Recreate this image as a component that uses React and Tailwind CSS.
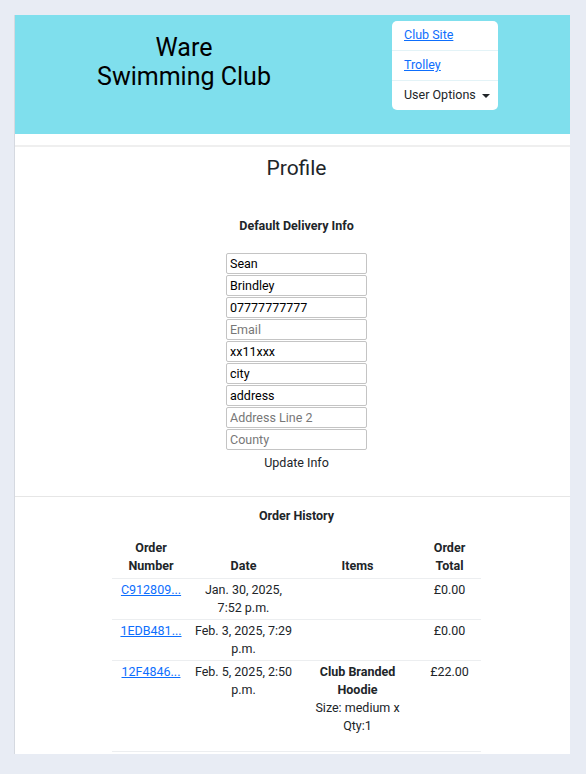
import React from "react";

const fields = [
  { value: "Sean", placeholder: "First Name" },
  { value: "Brindley", placeholder: "Last Name" },
  { value: "07777777777", placeholder: "Phone" },
  { value: "", placeholder: "Email" },
  { value: "xx11xxx", placeholder: "Postcode" },
  { value: "city", placeholder: "City" },
  { value: "address", placeholder: "Address Line 1" },
  { value: "", placeholder: "Address Line 2" },
  { value: "", placeholder: "County" },
];

const orders = [
  { id: "C912809...", date: "Jan. 30, 2025, 7:52 p.m.", items: null, total: "£0.00" },
  { id: "1EDB481...", date: "Feb. 3, 2025, 7:29 p.m.", items: null, total: "£0.00" },
  {
    id: "12F4846...",
    date: "Feb. 5, 2025, 2:50 p.m.",
    items: { name: "Club Branded Hoodie", detail: "Size: medium x Qty:1" },
    total: "£22.00",
  },
];

function Header() {
  return (
    <div className="h-[119px] bg-[#7fdfed] flex">
      <div className="w-[338px] pt-[18px] text-center text-[25px] leading-[29px] text-black">
        Ware
        <br />
        Swimming Club
      </div>
      <div className="ml-[39px] mt-[6px] w-[106px] h-[89px] bg-white rounded-[5px] text-[12.5px] whitespace-nowrap">
        <div className="h-[30px] px-[12px] flex items-center border-b border-[#e3f3f7]">
          <a href="#" className="text-[#0d6efd] underline">Club Site</a>
        </div>
        <div className="h-[30px] px-[12px] flex items-center border-b border-[#e3f3f7]">
          <a href="#" className="text-[#0d6efd] underline">Trolley</a>
        </div>
        <div className="h-[29px] pl-[12px] flex items-center text-[#212529]">
          User Options
          <span className="ml-[6px] w-0 h-0 border-x-[4px] border-x-transparent border-t-[4px] border-t-[#212529]"></span>
        </div>
      </div>
    </div>
  );
}

function Profile() {
  return (
    <div className="flex flex-col items-center pl-[8px]">
      <h1 className="mt-[9px] text-[21px] leading-[25px] text-[#212529]">Profile</h1>
      <h2 className="mt-[36px] text-[12.5px] leading-[17px] font-bold text-[#212529]">
        Default Delivery Info
      </h2>
      <div className="mt-[19px] flex flex-col gap-px">
        {fields.map((f, i) => (
          <input
            key={i}
            defaultValue={f.value}
            placeholder={i === 3 || i >= 7 ? f.placeholder : ""}
            className="w-[141px] h-[21px] border border-[#c4c4c4] rounded-[2px] px-[3px] text-[12.5px] text-black placeholder:text-[#777] outline-none"
          />
        ))}
      </div>
      <button className="mt-[4px] text-[12.5px] leading-[18px] text-[#212529]">Update Info</button>
    </div>
  );
}

function Orders() {
  return (
    <div className="flex flex-col items-center pl-[8px]">
      <h2 className="mt-[10px] text-[12.5px] leading-[17px] font-bold text-[#212529]">Order History</h2>
      <table className="mt-[15px] w-[369px] table-fixed text-[12.5px] leading-[18px] text-[#212529] text-center">
        <thead>
          <tr className="border-b border-[#eceef0] font-bold">
            <th className="w-[78px] pb-[3px] px-[4px] align-bottom">Order Number</th>
            <th className="w-[107px] pb-[3px] align-bottom">Date</th>
            <th className="w-[121px] pb-[3px] align-bottom">Items</th>
            <th className="w-[63px] pb-[3px] px-[8px] align-bottom">Order Total</th>
          </tr>
        </thead>
        <tbody>
          {orders.map((o) => (
            <tr key={o.id} className="border-b border-[#eceef0] align-top">
              <td className="pt-[2px] pb-[2px]">
                <a href="#" className="text-[#0d6efd] underline">{o.id}</a>
              </td>
              <td className="pt-[2px] pb-[2px] px-[4px]">{o.date}</td>
              <td className="pt-[2px] pb-[2px] px-[4px]">
                {o.items && (
                  <div className="pb-[14px]">
                    <div className="font-bold px-[10px]">{o.items.name}</div>
                    <div className="px-[10px]">{o.items.detail}</div>
                  </div>
                )}
              </td>
              <td className="pt-[2px] pb-[2px]">{o.total}</td>
            </tr>
          ))}
        </tbody>
      </table>
    </div>
  );
}

export default function App() {
  return (
    <div className="min-h-screen bg-[#e8ecf4] pt-[15px] font-['Roboto',sans-serif]">
      <div className="ml-[14px] w-[556px] bg-white border-l border-[#d5d9e0] pb-[2px]">
        <Header />
        <div className="h-[11px]"></div>
        <div className="h-[2px] bg-[#efefef]"></div>
        <Profile />
        <div className="mt-[24px] h-px bg-[#e6e6e6]"></div>
        <Orders />
      </div>
    </div>
  );
}
